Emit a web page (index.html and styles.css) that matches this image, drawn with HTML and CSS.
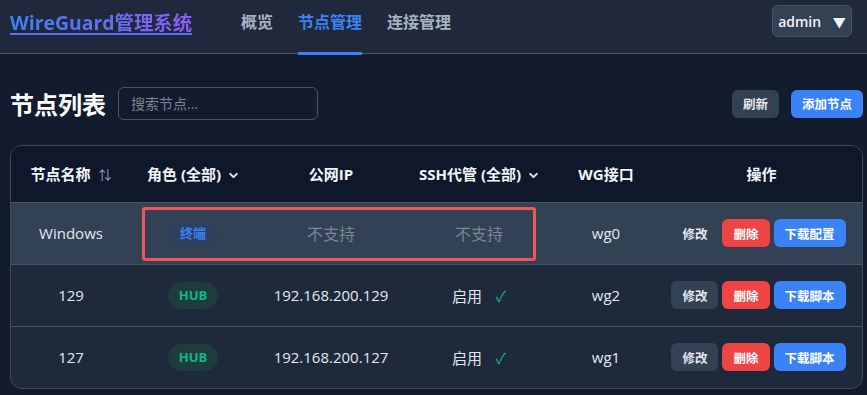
FILE: index.html
```html
<!DOCTYPE html>
<html lang="zh-CN">

<head>
    <meta charset="UTF-8">
    <meta name="viewport" content="width=device-width, initial-scale=1.0">
    <title>WireGuard管理系统</title>
    <link rel="stylesheet" href="styles.css">
</head>

<body>
    <header class="topbar">
        <a href="javascript:;" class="logo">WireGuard管理系统</a>
        <nav class="nav">
            <a href="javascript:;">概览</a>
            <a href="javascript:;" class="active">节点管理</a>
            <a href="javascript:;">连接管理</a>
        </nav>
        <button class="user">admin <span class="caret">▼</span></button>
    </header>

    <main class="main">
        <div class="toolbar">
            <h1>节点列表</h1>
            <input type="text" class="search" placeholder="搜索节点...">
            <div class="tools">
                <button class="btn btn-gray">刷新</button>
                <button class="btn btn-blue">添加节点</button>
            </div>
        </div>

        <div class="card">
            <table class="nodes">
                <colgroup>
                    <col style="width:120px">
                    <col style="width:124px">
                    <col style="width:152px">
                    <col style="width:144px">
                    <col style="width:110px">
                    <col>
                </colgroup>
                <thead>
                    <tr>
                        <th>节点名称 <span class="sort">⇅</span></th>
                        <th>角色 (全部) <svg class="chev" viewBox="0 0 10 10"><path d="M2 3.5l3 3 3-3"/></svg></th>
                        <th>公网IP</th>
                        <th>SSH代管 (全部) <svg class="chev" viewBox="0 0 10 10"><path d="M2 3.5l3 3 3-3"/></svg></th>
                        <th>WG接口</th>
                        <th>操作</th>
                    </tr>
                </thead>
                <tbody>
                    <tr class="hover">
                        <td>Windows</td>
                        <td><span class="tag tag-blue">终端</span></td>
                        <td class="muted">不支持</td>
                        <td class="muted">不支持</td>
                        <td>wg0</td>
                        <td>
                            <div class="ops">
                                <button class="btn btn-gray">修改</button>
                                <button class="btn btn-red">删除</button>
                                <button class="btn btn-blue">下载配置</button>
                            </div>
                        </td>
                    </tr>
                    <tr>
                        <td>129</td>
                        <td><span class="tag tag-green">HUB</span></td>
                        <td>192.168.200.129</td>
                        <td>启用 <span class="ok">✓</span></td>
                        <td>wg2</td>
                        <td>
                            <div class="ops">
                                <button class="btn btn-gray">修改</button>
                                <button class="btn btn-red">删除</button>
                                <button class="btn btn-blue">下载脚本</button>
                            </div>
                        </td>
                    </tr>
                    <tr>
                        <td>127</td>
                        <td><span class="tag tag-green">HUB</span></td>
                        <td>192.168.200.127</td>
                        <td>启用 <span class="ok">✓</span></td>
                        <td>wg1</td>
                        <td>
                            <div class="ops">
                                <button class="btn btn-gray">修改</button>
                                <button class="btn btn-red">删除</button>
                                <button class="btn btn-blue">下载脚本</button>
                            </div>
                        </td>
                    </tr>
                </tbody>
            </table>
            <!-- 标注框 -->
            <div class="mark"></div>
        </div>
    </main>
</body>

</html>
```

FILE: styles.css
```css
* {
    margin: 0;
    padding: 0;
    box-sizing: border-box;
}

body {
    background-color: #131b2e;
    color: #e2e8f0;
    font-family: "Open Sans", "Noto Sans CJK SC", sans-serif;
    height: 395px;
    overflow: hidden;
}

button {
    font-family: inherit;
    border: none;
    cursor: pointer;
}

.topbar {
    height: 54px;
    display: flex;
    align-items: center;
    padding: 0 15px 0 10px;
    background-color: #1f293b;
    border-bottom: 1px solid #4b5563;
}

.logo {
    font-size: 19.4px;
    font-weight: 700;
    background: linear-gradient(90deg, #3b82f6, #8b5cf6);
    -webkit-background-clip: text;
    background-clip: text;
    color: transparent;
    text-decoration: underline;
    text-decoration-color: #5b6ff5;
    text-decoration-thickness: 2px;
    text-underline-offset: 3px;
    margin-top: -10px;
}

.nav {
    display: flex;
    gap: 25px;
    margin-left: 49px;
    align-self: stretch;
}

.nav a {
    display: flex;
    align-items: center;
    padding-bottom: 10px;
    font-size: 16px;
    font-weight: 700;
    color: #a7b2c3;
    text-decoration: none;
    border-bottom: 3px solid transparent;
    margin-bottom: -2px;
}

.nav a.active {
    color: #3b82f6;
    border-bottom-color: #3b82f6;
}

.user {
    margin-left: auto;
    margin-top: -11px;
    width: 80px;
    height: 32px;
    background-color: #334155;
    border: 1px solid #475569;
    border-radius: 6px;
    color: #f1f5f9;
    font-size: 14px;
    font-weight: 600;
}

.user .caret {
    font-size: 13px;
    margin-left: 8px;
}

.main {
    padding: 33px 4px 0 10px;
}

.toolbar {
    display: flex;
    align-items: center;
    height: 33px;
}

.toolbar h1 {
    font-size: 24px;
    font-weight: 700;
    color: #fff;
    margin-right: 12px;
}

.search {
    width: 200px;
    height: 33px;
    background: transparent;
    border: 1px solid #475569;
    border-radius: 6px;
    padding: 0 12px;
    font-family: inherit;
    font-size: 14px;
    color: #e2e8f0;
    outline: none;
}

.search::placeholder {
    color: #7b8494;
}

.tools {
    margin-left: auto;
    display: flex;
    gap: 12px;
}

.btn {
    height: 28px;
    padding: 0 11px;
    border-radius: 6px;
    font-size: 12.5px;
    font-weight: 700;
    color: #fff;
}

.btn-gray {
    background-color: #334155;
    color: #e5e7eb;
}

.btn-blue {
    background-color: #3b82f6;
}

.btn-red {
    background-color: #ef4444;
}

.card {
    position: relative;
    margin-top: 25px;
    width: 853px;
    border: 1px solid #3d4a5c;
    border-radius: 12px;
    overflow: hidden;
    background-color: #1e293b;
}

.nodes {
    width: 100%;
    border-collapse: collapse;
    table-layout: fixed;
}

.nodes th {
    height: 56px;
    background-color: #0f172a;
    color: #f1f5f9;
    font-size: 15px;
    font-weight: 700;
    text-align: center;
    white-space: nowrap;
}

.nodes td {
    height: 62px;
    text-align: center;
    font-size: 15px;
    color: #e2e8f0;
    border-top: 1px solid #475569;
    white-space: nowrap;
}

.nodes tr.hover td {
    background-color: #334155;
}

.sort {
    color: #94a3b8;
    font-size: 13px;
    font-weight: 400;
    margin-left: 4px;
}

.chev {
    width: 11px;
    height: 11px;
    margin-left: 3px;
    vertical-align: -1px;
    fill: none;
    stroke: #e2e8f0;
    stroke-width: 1.8;
    stroke-linecap: round;
    stroke-linejoin: round;
}

.tag {
    display: inline-block;
    width: 50px;
    height: 27px;
    line-height: 27px;
    border-radius: 14px;
    font-size: 13px;
    font-weight: 700;
}

.tag-blue {
    background-color: #2d4060;
    color: #3b82f6;
}

.tag-green {
    background-color: #1e3b40;
    color: #10b981;
}

.nodes td.muted {
    color: #7c8594;
    font-size: 16px;
}

.ok {
    color: #10b981;
    margin-left: 10px;
}

.ops {
    display: flex;
    justify-content: center;
    gap: 4px;
    padding-right: 6px;
}

.mark {
    position: absolute;
    left: 131px;
    top: 61px;
    width: 394px;
    height: 54px;
    border: 3px solid #f25555;
    border-radius: 3px;
}
```
